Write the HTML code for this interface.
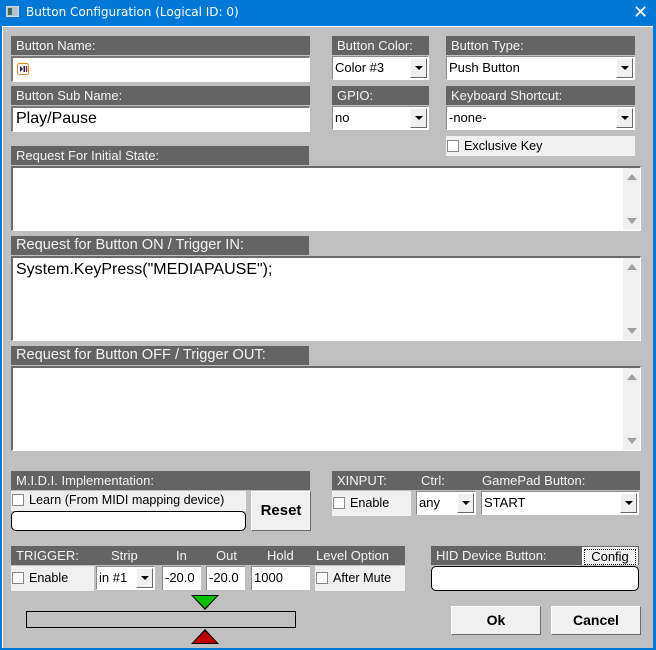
<!DOCTYPE html>
<html><head><meta charset="utf-8"><style>
*{box-sizing:border-box;margin:0;padding:0}
body{width:656px;height:650px;overflow:hidden;background:#0078d7;font-family:"Liberation Sans",Arial,sans-serif;position:relative}
.a{position:absolute}
#win{left:2px;top:26px;width:651px;height:622px;background:#c0c0c0;border-top:1px solid #fff;border-left:1px solid #fff}
.h{position:absolute;background:#646464;color:#f4f4f4;font-size:13px;line-height:19px;padding-left:5px;height:19px;white-space:nowrap}
.in{position:absolute;background:#fff;border-top:2px solid #7a7a7a;border-left:2px solid #7a7a7a;border-right:1px solid #fff;border-bottom:1px solid #fff}
.sel{position:absolute;background:#fff;border-top:1px solid #8a8a8a;border-left:1px solid #8a8a8a;border-right:1px solid #fff;border-bottom:1px solid #fff;font-size:13px;line-height:21px;padding-left:2px;color:#000}
.sel .ar{position:absolute;right:1px;top:1px;bottom:1px;width:17px;background:#f0f0f0;border-right:1px solid #6a6a6a;border-bottom:1px solid #6a6a6a;border-top:1px solid #fff;border-left:1px solid #fff}
.sel .ar:after{content:"";position:absolute;left:4px;top:50%;margin-top:-2px;border-left:4px solid transparent;border-right:4px solid transparent;border-top:4px solid #000}
.lt{position:absolute;background:#f0f0f0;font-size:12.6px;color:#000;white-space:nowrap}
.cb{display:inline-block;width:12px;height:12px;background:#fff;border:1px solid #888;vertical-align:-2px;margin-right:5px}
.ta{position:absolute;background:#fff;border-top:2px solid #6a6a6a;border-left:2px solid #6a6a6a;border-right:1px solid #fff;border-bottom:1px solid #fff}
.sb{position:absolute;right:0;top:0;bottom:0;width:17px;background:#f0f0f0}
.sb:before{content:"";position:absolute;left:4px;top:6px;border-left:5px solid transparent;border-right:5px solid transparent;border-bottom:6px solid #a0a0a0}
.sb:after{content:"";position:absolute;left:4px;bottom:6px;border-left:5px solid transparent;border-right:5px solid transparent;border-top:6px solid #a0a0a0}
.btn{position:absolute;background:#f0f0f0;border-top:1px solid #fff;border-left:1px solid #fff;border-right:1px solid #6a6a6a;border-bottom:1px solid #6a6a6a;font-weight:bold;font-size:14px;text-align:center;color:#000}
.rnd{position:absolute;background:#fff;border:1px solid #000;border-radius:5px}
.num{position:absolute;background:#fff;border-top:1px solid #8a8a8a;border-left:1px solid #8a8a8a;font-size:13px;line-height:21px;padding-left:2px}
</style></head><body>
<div class="a" style="left:6px;top:6px;width:13px;height:11px;background:#b7c4cf;border:1px solid #cfd8de"><div class="a" style="left:1px;top:1px;width:4px;height:7px;background:#3c6f5f"></div></div>
<div class="a" style="left:26px;top:5px;color:#fff;font-family:'DejaVu Sans',sans-serif;font-size:12px">Button Configuration (Logical ID: 0)</div>
<div class="a" style="left:633px;top:2px;color:#fff;font-size:18px;font-family:'DejaVu Sans',sans-serif">✕</div>
<div id="win" class="a"></div>

<div class="h" style="left:11px;top:36px;width:299px">Button Name:</div>
<div class="in" style="left:11px;top:56px;width:299px;height:26px"><svg class="a" style="left:4px;top:5px" width="12" height="12" viewBox="0 0 12 12"><rect x="0.5" y="0.5" width="11" height="11" rx="2" fill="#fff" stroke="#e08a20"/><path d="M3 3 L6 6 L3 9 Z" fill="#102060"/><rect x="6.5" y="3" width="1.5" height="6" fill="#102060"/><rect x="8.8" y="3" width="1.5" height="6" fill="#c02020"/></svg></div>
<div class="h" style="left:11px;top:86px;width:299px">Button Sub Name:</div>
<div class="in" style="left:11px;top:106px;width:299px;height:26px;font-size:16px;line-height:22px;padding-left:3px">Play/Pause</div>

<div class="h" style="left:332px;top:36px;width:97px">Button Color:</div>
<div class="sel" style="left:332px;top:56px;width:97px;height:24px">Color #3<div class="ar"></div></div>
<div class="h" style="left:446px;top:36px;width:189px">Button Type:</div>
<div class="sel" style="left:446px;top:56px;width:189px;height:24px">Push Button<div class="ar"></div></div>
<div class="h" style="left:332px;top:86px;width:97px">GPIO:</div>
<div class="sel" style="left:332px;top:106px;width:97px;height:24px">no<div class="ar"></div></div>
<div class="h" style="left:446px;top:86px;width:189px">Keyboard Shortcut:</div>
<div class="sel" style="left:446px;top:106px;width:189px;height:24px">-none-<div class="ar"></div></div>
<div class="lt" style="left:446px;top:136px;width:189px;height:20px;line-height:20px;padding-left:1px"><span class="cb"></span>Exclusive Key</div>

<div class="h" style="left:11px;top:146px;width:298px">Request For Initial State:</div>
<div class="ta" style="left:11px;top:166px;width:630px;height:65px"><div class="sb"></div></div>
<div class="h" style="left:11px;top:236px;width:298px;font-size:14.6px">Request for Button ON / Trigger IN:</div>
<div class="ta" style="left:11px;top:256px;width:630px;height:85px;font-size:16px;line-height:22px;padding:1px 0 0 3px">System.KeyPress("MEDIAPAUSE");<div class="sb"></div></div>
<div class="h" style="left:11px;top:346px;width:298px;font-size:14.6px">Request for Button OFF / Trigger OUT:</div>
<div class="ta" style="left:11px;top:366px;width:630px;height:85px"><div class="sb"></div></div>

<div class="h" style="left:11px;top:471px;width:299px">M.I.D.I. Implementation:</div>
<div class="lt" style="left:11px;top:491px;width:235px;height:20px;line-height:18px;padding-left:1px"><span class="cb"></span>Learn (From MIDI mapping device)</div>
<div class="rnd" style="left:11px;top:511px;width:235px;height:20px"></div>
<div class="btn" style="left:251px;top:491px;width:60px;height:40px;line-height:38px;font-size:15px">Reset</div>

<div class="h" style="left:332px;top:471px;width:308px">XINPUT:<span class="a" style="left:89px">Ctrl:</span><span class="a" style="left:150px">GamePad Button:</span></div>
<div class="lt" style="left:332px;top:491px;width:79px;height:25px;line-height:24px;padding-left:1px"><span class="cb"></span>Enable</div>
<div class="sel" style="left:416px;top:491px;width:60px;height:24px">any<div class="ar"></div></div>
<div class="sel" style="left:481px;top:491px;width:158px;height:24px">START<div class="ar"></div></div>

<div class="h" style="left:11px;top:546px;width:394px">TRIGGER:<span class="a" style="left:100px">Strip</span><span class="a" style="left:165px">In</span><span class="a" style="left:205px">Out</span><span class="a" style="left:256px">Hold</span><span class="a" style="left:305px">Level Option</span></div>
<div class="lt" style="left:11px;top:566px;width:83px;height:25px;line-height:24px;padding-left:1px"><span class="cb"></span>Enable</div>
<div class="sel" style="left:96px;top:566px;width:59px;height:24px">in #1<div class="ar"></div></div>
<div class="num" style="left:162px;top:566px;width:39px;height:24px">-20.0</div>
<div class="num" style="left:206px;top:566px;width:39px;height:24px">-20.0</div>
<div class="num" style="left:251px;top:566px;width:59px;height:24px">1000</div>
<div class="lt" style="left:315px;top:566px;width:90px;height:25px;line-height:24px;padding-left:1px"><span class="cb"></span>After Mute</div>
<div class="a" style="left:191px;top:595px;border-left:14px solid transparent;border-right:14px solid transparent;border-top:15px solid #000"></div>
<div class="a" style="left:193px;top:596px;border-left:12px solid transparent;border-right:12px solid transparent;border-top:12px solid #00c000"></div>
<div class="a" style="left:26px;top:611px;width:270px;height:17px;border:1px solid #000;background:#c0c0c0"></div>
<div class="a" style="left:191px;top:629px;border-left:14px solid transparent;border-right:14px solid transparent;border-bottom:15px solid #000"></div>
<div class="a" style="left:193px;top:631px;border-left:12px solid transparent;border-right:12px solid transparent;border-bottom:12px solid #c00000"></div>

<div class="h" style="left:431px;top:546px;width:208px">HID Device Button:</div>
<div class="a" style="left:582px;top:547px;width:56px;height:18px;background:#f0f0f0;border:1px solid #fff;font-size:13px;line-height:14px;text-align:center;color:#000"><div style="border:1px dotted #000;margin:1px">Config</div></div>
<div class="rnd" style="left:431px;top:566px;width:208px;height:25px"></div>

<div class="btn" style="left:451px;top:606px;width:90px;height:29px;line-height:27px">Ok</div>
<div class="btn" style="left:551px;top:606px;width:90px;height:29px;line-height:27px">Cancel</div>
</body></html>
